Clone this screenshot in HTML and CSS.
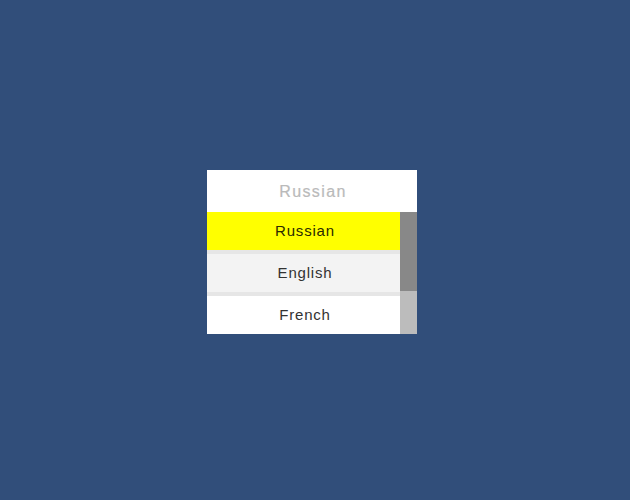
FILE: index.html
```html
<!DOCTYPE html>
<html>
<head>
<meta charset="utf-8">
<link rel="stylesheet" href="styles.css">
</head>
<body>
<div class="stage">
  <div class="dropdown">
    <div class="header">Russian</div>
    <div class="list">
      <div class="items">
        <div class="item selected">Russian</div>
        <div class="item alt">English</div>
        <div class="item">French</div>
      </div>
      <div class="scrollbar"><div class="thumb"></div></div>
    </div>
  </div>
</div>
</body>
</html>
```
FILE: styles.css
```css
html, body {
  margin: 0;
  padding: 0;
  background: #314e7a;
}
.stage {
  width: 630px;
  height: 500px;
  box-sizing: border-box;
  padding: 170px 0 0 207px;
  font-family: "Liberation Sans", Arial, sans-serif;
}
.dropdown {
  width: 210px;
  background: #ffffff;
}
.header {
  height: 42px;
  box-sizing: border-box;
  display: flex;
  align-items: center;
  justify-content: center;
  color: #bababa;
  font-size: 16px;
  letter-spacing: 1.4px;
  padding-left: 2px;
  padding-top: 1px;
  -webkit-text-stroke: 0.2px #bababa;
}
.list {
  display: flex;
  height: 122px;
}
.items {
  width: 193px;
  display: flex;
  flex-direction: column;
  gap: 4px;
  background: #e6e6e6;
}
.item {
  height: 38px;
  display: flex;
  align-items: center;
  justify-content: center;
  background: #ffffff;
  color: #323232;
  font-size: 15px;
  letter-spacing: 0.8px;
  padding-left: 3px;
  padding-bottom: 2px;
  box-sizing: border-box;
}
.item.selected {
  background: #ffff00;
  color: #2a2a00;
}
.item.alt {
  background: #f3f3f3;
}
.scrollbar {
  width: 17px;
  background: #bcbcbc;
}
.thumb {
  height: 79px;
  background: #888888;
}
```
